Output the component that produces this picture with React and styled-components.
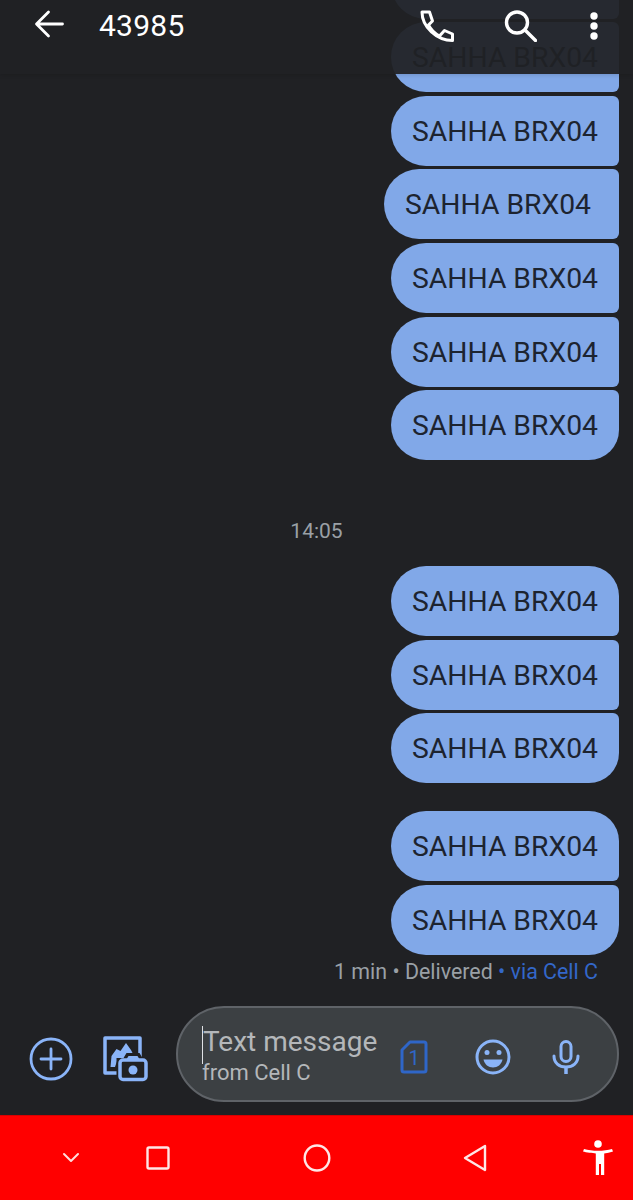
import React from 'react';
import styled, { createGlobalStyle } from 'styled-components';

const Global = createGlobalStyle`
  html, body { margin: 0; padding: 0; background: #202124; }
  * { box-sizing: border-box; }
`;
const Page = styled.div`
  width: 633px; height: 1200px; display: flex; flex-direction: column;
  background: #202124; font-family: Roboto, "Noto Sans", sans-serif; overflow: hidden; position: relative;
`;
const Header = styled.header`
  position: absolute; top: 0; left: 0; right: 0; height: 74px; z-index: 2;
  background: rgba(32,33,36,0.94); display: flex; align-items: flex-start;
  padding: 8px 35px 0 33px; color: #fff;
  box-shadow: 0 1px 4px rgba(0,0,0,0.15);
`;
const Title = styled.div`
  font-size: 30px; line-height: 36px; margin-left: 34px; flex: 1; color: #fff; letter-spacing: 0.25px;
`;
const HeadIcons = styled.div`display: flex; align-items: center; gap: 50px; height: 36px;`;
const MoreSlot = styled.div`display: flex; margin-left: 3px;`;
const Chat = styled.main`
  flex: 1; min-height: 0; display: flex; flex-direction: column; justify-content: flex-end;
  align-items: flex-end; padding: 0 14px 0 0;
`;
const Group = styled.div`
  display: flex; flex-direction: column; align-items: flex-end; gap: 3.6px; margin-top: ${p => p.$top || 0}px;
`;
const Bubble = styled.div`
  height: 70px; min-width: 228px; background: #81a8e8; color: #1d2430; font-size: 28.3px; line-height: 72px;
  padding: 0 ${p => p.$wide ? 28 : 21}px 0 21px; white-space: nowrap;
  border-radius: 35px ${p => p.$first ? 30 : 6}px ${p => p.$last ? 30 : 6}px 35px;
`;
const Time = styled.div`
  align-self: center; margin: 58px 0 0 14px; height: 32px; line-height: 26px; color: #9aa0a6; font-size: 21px;
`;
const Status = styled.div`
  height: 32px; margin-top: 2px; padding-right: 21px; line-height: 30px; font-size: 21.4px; color: #9aa0a6; white-space: nowrap;
`;
const Via = styled.span`color: #3367c9;`;
const InputRow = styled.div`
  height: 128px; flex: none; display: flex; align-items: flex-start; padding: 19px 14px 0 29px;
`;
const Attach = styled.div`display: flex; align-items: center; gap: 30px; height: 95px; padding-top: 11px;`;
const Field = styled.div`
  margin-left: 27px; flex: 1; height: 96px; border-radius: 48px; background: #3c4043; border: 2px solid #5f6368;
  display: flex; align-items: center; padding: 0 37px 0 24px;
`;
const FieldText = styled.div`flex: 1; position: relative; padding-top: 2px;`;
const Caret = styled.span`position: absolute; left: 0; top: 3px; width: 1px; height: 38px; background: #dfe1e5;`;
const Placeholder = styled.div`font-size: 28px; line-height: 34px; color: #b4b7ba; padding-left: 1px; white-space: nowrap;`;
const Sub = styled.div`font-size: 22px; line-height: 25px; color: #b4b7ba; margin-top: 1px; white-space: nowrap;`;
const FieldIcons = styled.div`display: flex; align-items: center; gap: 41px; padding-top: 5px;`;
const SimSlot = styled.div`display: flex; margin-right: 6px;`;
const SimNum = styled.text`font-family: Roboto, sans-serif; font-size: 20px; fill: #2f66c8;`;
const Nav = styled.nav`
  height: 85px; flex: none; background: #ff0000; display: flex; align-items: center;
  border-top: 1px solid #d90000;
`;
const NavSlot = styled.div`display: flex; margin-left: ${p => p.$gap}px;`;

const Stroke = { fill: 'none', strokeLinecap: 'round', strokeLinejoin: 'round' };

const BackIcon = () => (
  <svg width="32" height="32" viewBox="0 0 32 32" {...Stroke} stroke="#fff" strokeWidth="2.8">
    <path d="M29.500 16H4M15.500 4 3.500 16l12 12" />
  </svg>
);
const PhoneIcon = () => (
  <svg width="34" height="32" viewBox="0 0 34 32" {...Stroke} stroke="#fff" strokeWidth="3">
    <path d="M2 2h7.500l3 9-4 4c2.500 5 6 8.500 11 11l5-5.500 8 3.500V30.500C17 30.500 2 17 2 2Z" />
  </svg>
);
const SearchIcon = () => (
  <svg width="33" height="32" viewBox="0 0 33 32" {...Stroke} stroke="#fff" strokeWidth="3.4">
    <circle cx="13" cy="12.500" r="10.500" />
    <path d="m21 20 10.500 10.500" />
  </svg>
);
const MoreIcon = () => (
  <svg width="8" height="28" viewBox="0 0 8 28" fill="#fff">
    <circle cx="4" cy="4" r="3.700" /><circle cx="4" cy="14" r="3.700" /><circle cx="4" cy="24" r="3.700" />
  </svg>
);
const PlusIcon = () => (
  <svg width="44" height="44" viewBox="0 0 44 44" {...Stroke} stroke="#8ab4f8" strokeWidth="2.800">
    <circle cx="22" cy="22" r="20" />
    <path d="M22 12v20M12 22h20" />
  </svg>
);
const GalleryIcon = () => (
  <svg width="46" height="46" viewBox="0 0 46 46">
    <path d="M15 37H2V2h35v19" fill="none" stroke="#8ab4f8" strokeWidth="3.500" strokeLinejoin="round" />
    <path d="M7.500 31 8.500 20l5-7 4 2 5.500-8 5 7 4 8H20l-6 3-2 6Z" fill="#8ab4f8" />
    <path d="M13.500 46V22h7l3-5h13l3 5H46v24Z" fill="#202124" />
    <rect x="17" y="24" width="26" height="19.500" rx="3" fill="#202124" stroke="#8ab4f8" strokeWidth="3.500" />
    <path d="M23 24l2.500-4h9l2.500 4Z" fill="#8ab4f8" />
    <circle cx="30" cy="34" r="4.500" fill="#8ab4f8" />
  </svg>
);
const SimIcon = () => (
  <svg width="28" height="34" viewBox="0 0 28 34">
    <path d="M10 2h14a2 2 0 0 1 2 2v26a2 2 0 0 1-2 2H4a2 2 0 0 1-2-2V10Z" fill="none" stroke="#2f66c8" strokeWidth="3" strokeLinejoin="round" />
    <SimNum x="14" y="25" textAnchor="middle">1</SimNum>
  </svg>
);
const SmileIcon = () => (
  <svg width="36" height="36" viewBox="0 0 36 36">
    <circle cx="18" cy="18" r="16" fill="none" stroke="#8ab4f8" strokeWidth="3" />
    <circle cx="12" cy="13.500" r="2.500" fill="#8ab4f8" />
    <circle cx="24" cy="13.500" r="2.500" fill="#8ab4f8" />
    <path d="M8.500 20.500h19c-1 5-5 8-9.500 8s-8.500-3-9.500-8Z" fill="#8ab4f8" />
  </svg>
);
const MicIcon = () => (
  <svg width="28" height="36" viewBox="0 0 28 36">
    <rect x="9" y="2.500" width="10" height="20" rx="5" fill="none" stroke="#8ab4f8" strokeWidth="3" />
    <path d="M2 17c0 7 5 11 12 11s12-4 12-11" fill="none" stroke="#8ab4f8" strokeWidth="3" strokeLinecap="round" />
    <path d="M14 28v7" stroke="#8ab4f8" strokeWidth="3.500" />
  </svg>
);
const NavChevron = () => (
  <svg width="18" height="12" viewBox="0 0 18 12" {...Stroke} stroke="#ffdcdc" strokeWidth="2">
    <path d="M2 2l7 7 7-7" />
  </svg>
);
const NavSquare = () => (
  <svg width="24" height="24" viewBox="0 0 24 24" fill="none" stroke="#ffe6e6" strokeWidth="2.400">
    <rect x="1.500" y="1.500" width="21" height="21" rx="1.500" />
  </svg>
);
const NavCircle = () => (
  <svg width="28" height="28" viewBox="0 0 28 28" fill="none" stroke="#ffe6e6" strokeWidth="2.400">
    <ellipse cx="14" cy="14" rx="12.300" ry="12.500" />
  </svg>
);
const NavTriangle = () => (
  <svg width="26" height="28" viewBox="0 0 26 28" fill="none" stroke="#ffe6e6" strokeWidth="2.400" strokeLinejoin="round">
    <path d="M23 2 3 14l20 12Z" />
  </svg>
);
const NavA11y = () => (
  <svg width="32" height="36" viewBox="0 0 32 36" fill="#fff">
    <circle cx="16" cy="4" r="3.800" />
    <path d="M1 11.500 2 9c4 1.200 9 1.800 14 1.800s10-.6 14-1.800l1 2.500c-3 1-6 1.600-8.800 1.900V35h-3.200V24h-2v11H13.800V13.400C11 13.100 4 12.500 1 11.500Z" />
  </svg>
);

const Msg = ({ ...p }) => <Bubble {...p}>SAHHA BRX04</Bubble>;

export default function App() {
  return (
    <Page>
      <Global />
      <Header>
        <BackIcon />
        <Title>43985</Title>
        <HeadIcons>
          <PhoneIcon />
          <SearchIcon />
          <MoreSlot><MoreIcon /></MoreSlot>
        </HeadIcons>
      </Header>
      <Chat>
        <Group>
          <Bubble />
          <Msg />
          <Msg />
          <Msg $wide />
          <Msg />
          <Msg />
          <Msg $last />
        </Group>
        <Time>14:05</Time>
        <Group $top={22}>
          <Msg $first />
          <Msg />
          <Msg $last />
        </Group>
        <Group $top={28}>
          <Msg $first />
          <Msg $last />
        </Group>
        <Status>1 min • Delivered <Via>• via Cell C</Via></Status>
      </Chat>
      <InputRow>
        <Attach>
          <PlusIcon />
          <GalleryIcon />
        </Attach>
        <Field>
          <FieldText>
            <Caret />
            <Placeholder>Text message</Placeholder>
            <Sub>from Cell C</Sub>
          </FieldText>
          <FieldIcons>
            <SimSlot><SimIcon /></SimSlot>
            <SmileIcon />
            <MicIcon />
          </FieldIcons>
        </Field>
      </InputRow>
      <Nav>
        <NavSlot $gap={62}><NavChevron /></NavSlot>
        <NavSlot $gap={66}><NavSquare /></NavSlot>
        <NavSlot $gap={133}><NavCircle /></NavSlot>
        <NavSlot $gap={131}><NavTriangle /></NavSlot>
        <NavSlot $gap={94}><NavA11y /></NavSlot>
      </Nav>
    </Page>
  );
}
